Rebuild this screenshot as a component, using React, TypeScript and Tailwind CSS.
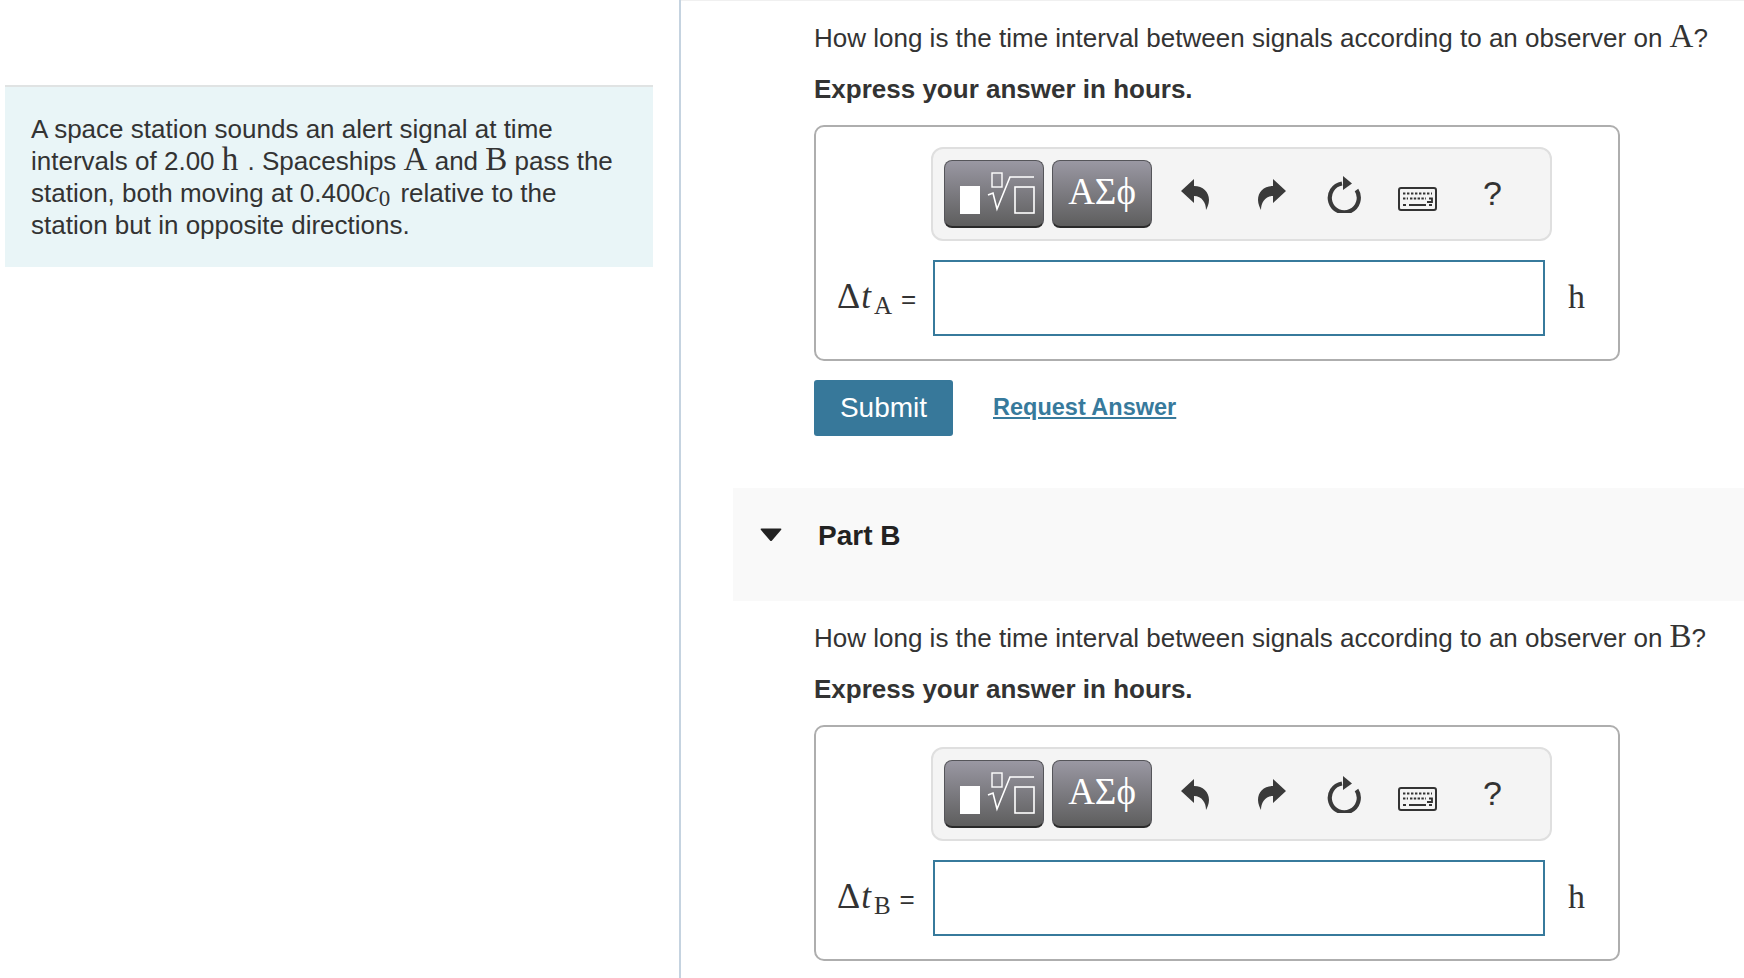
import React from 'react';

const SANS = { fontFamily: '"Liberation Sans", Arial, sans-serif' };

const Serif: React.FC<{ children: React.ReactNode; className?: string }> = ({ children, className }) => (
  <span className={`font-['Liberation_Serif',serif] ${className ?? ''}`}>{children}</span>
);

const TemplatesButton = () => (
  <button className="h-[68px] w-[100px] rounded-[8px] border border-[#55555a] border-b-2 border-b-[#2a2a2a] bg-gradient-to-b from-[#9a98a3] to-[#5e5e5e]">
    <svg width="98" height="65" viewBox="1 1 98 65" fill="none" className="block">
      <rect x="16" y="26" width="20" height="28" fill="#fff" />
      <rect x="48" y="13" width="10" height="14" stroke="#fff" strokeWidth="1.4" />
      <path d="M44 35 L49 33 L53 49 L66 17 L90 17" stroke="#fff" strokeWidth="1.6" />
      <rect x="71" y="27" width="19" height="26" stroke="#fff" strokeWidth="1.6" />
    </svg>
  </button>
);

const SymbolsButton = () => (
  <button className="ml-[8px] h-[68px] w-[100px] rounded-[8px] border border-[#55555a] border-b-2 border-b-[#2a2a2a] bg-gradient-to-b from-[#9a98a3] to-[#5e5e5e] pb-[4px] text-center text-[37px] leading-none text-white">
    <Serif>ΑΣϕ</Serif>
  </button>
);

const UndoIcon = ({ flip }: { flip?: boolean }) => (
  <svg width="28" height="31" viewBox="0 0 28 31" className={flip ? '-scale-x-100' : ''}>
    <path d="M0 12 L13 0 V7 C22 7 28 13 28 21 C28 25 26 29 25 31 C25 24 21 17 13 17 V24 Z" fill="#3a3a3a" />
  </svg>
);

const ResetIcon = () => (
  <svg width="34" height="38" viewBox="0 0 34 38" fill="none">
    <path d="M29.5 15 A14.5 14.5 0 1 1 15 8.5" stroke="#3a3a3a" strokeWidth="4.2" />
    <path d="M16 1 L25 8.5 L16 15 Z" fill="#3a3a3a" />
  </svg>
);

const KeyboardIcon = () => (
  <svg width="39" height="24" viewBox="0 0 39 24" fill="none">
    <rect x="1" y="1" width="37" height="22" rx="2" stroke="#333" strokeWidth="2" />
    <path d="M5 6.5 H34" stroke="#333" strokeWidth="2" strokeDasharray="2.4 1.6" />
    <path d="M5 11.5 H10 M12 11.5 H28" stroke="#333" strokeWidth="2" strokeDasharray="2.4 1.4" />
    <path d="M31 11.5 H34 V15 H29" stroke="#333" strokeWidth="1.8" />
    <path d="M5 18 H8 M11 18 H28 M31 18 H34" stroke="#333" strokeWidth="2" />
  </svg>
);

const Toolbar = () => (
  <div className="ml-[115px] flex h-[94px] w-[621px] items-center rounded-[12px] border-2 border-[#dfdfdf] bg-[#f4f4f4] pl-[11px]">
    <TemplatesButton />
    <SymbolsButton />
    <div className="ml-[29px]"><UndoIcon /></div>
    <div className="ml-[49px]"><UndoIcon flip /></div>
    <div className="ml-[41px]"><ResetIcon /></div>
    <div className="ml-[37px] mt-[9px]"><KeyboardIcon /></div>
    <div className="ml-[46px] mb-[2px] text-[34px] leading-none text-[#333]">?</div>
  </div>
);

const AnswerBox: React.FC<{ sub: string }> = ({ sub }) => (
  <div className="h-[236px] w-[806px] rounded-[10px] border-2 border-[#aeaeae] pt-[20px]">
    <Toolbar />
    <div className="mt-[19px] flex items-center">
      <div className="mb-[4px] flex w-[117px] items-baseline pl-[21px] text-[#333]">
        <Serif className="text-[36px] leading-none">Δ</Serif>
        <Serif className="ml-[1px] text-[35px] italic leading-none">t</Serif>
        <Serif className="relative top-[6px] ml-[3px] text-[25px] leading-none">{sub}</Serif>
        <span className="ml-[9px] text-[26px] leading-none">=</span>
      </div>
      <div className="h-[76px] w-[612px] border-2 border-[#377a9c] bg-white" />
      <Serif className="mb-[2px] ml-[23px] text-[34px] leading-none text-[#333]">h</Serif>
    </div>
  </div>
);

const Question: React.FC<{ who: string }> = ({ who }) => (
  <>
    <p className="text-[26px] leading-[32px] text-[#333]">
      How long is the time interval between signals according to an observer on{' '}
      <Serif className="text-[33px] leading-[0]">{who}</Serif>?
    </p>
    <p className="mt-[19px] text-[26px] font-bold leading-[32px] text-[#333]">Express your answer in hours.</p>
  </>
);

export default function App() {
  return (
    <div className="flex h-[978px] overflow-hidden bg-white" style={SANS}>
      <aside className="h-full w-[681px] shrink-0 border-r-2 border-[#c5d3e0] pl-[5px] pr-[26px] pt-[85px]">
        <div className="h-[182px] border-t-2 border-[#e0e3e3] bg-[#e9f5f7] pl-[26px] pt-[26px] text-[26px] leading-[32px] text-[#333]">
          <p>
            A space station sounds an alert signal at time
            <br />
            intervals of 2.00 <Serif className="mr-[2px] text-[33px] leading-[0]">h</Serif> . Spaceships{' '}
            <Serif className="text-[33px] leading-[0]">A</Serif> and <Serif className="text-[33px] leading-[0]">B</Serif> pass the
            <br />
            station, both moving at 0.400
            <Serif className="text-[31px] italic leading-[0]">c</Serif>
            <Serif className="relative top-[4px] mr-[3px] text-[23px] leading-[0]">0</Serif> relative to the
            <br />
            station but in opposite directions.
          </p>
        </div>
      </aside>

      <main className="min-w-0 flex-1 border-t border-[#f0f0f0] pl-[52px]">
        <div className="pl-[81px] pt-[21px]">
          <Question who="A" />
          <div className="mt-[20px]">
            <AnswerBox sub="A" />
          </div>
          <div className="mt-[19px] flex items-center">
            <button className="h-[56px] w-[139px] rounded-[3px] bg-[#37789a] text-[28px] text-white">Submit</button>
            <a className="ml-[40px] text-[23.5px] font-bold text-[#377a9c] underline">Request Answer</a>
          </div>
        </div>

        <div className="mt-[52px] flex h-[113px] bg-[#f9f9f9] pl-[27px] pt-[30px]">
          <svg width="22" height="14" viewBox="0 0 22 14" className="mt-[10px]">
            <path d="M1.5 0.5 H20.5 Q22 0.5 21 2 L12 12.5 Q11 13.5 10 12.5 L1 2 Q0 0.5 1.5 0.5 Z" fill="#222" />
          </svg>
          <h2 className="ml-[36px] text-[28px] font-bold leading-[36px] text-[#222]">Part B</h2>
        </div>

        <div className="pl-[81px] pt-[21px]">
          <Question who="B" />
          <div className="mt-[20px]">
            <AnswerBox sub="B" />
          </div>
        </div>
      </main>
    </div>
  );
}
